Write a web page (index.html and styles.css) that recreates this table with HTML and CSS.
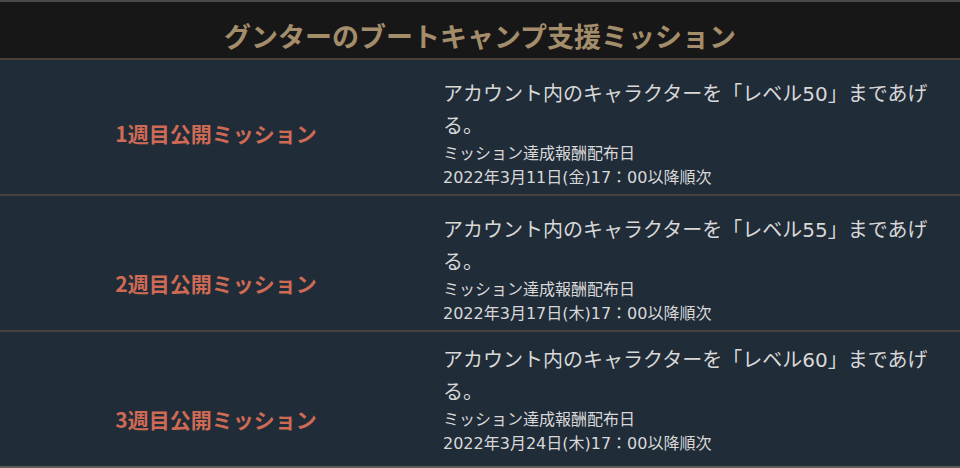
FILE: index.html
```html
<!DOCTYPE html>
<html lang="ja">
<head>
<meta charset="utf-8">
<link rel="stylesheet" href="styles.css">
</head>
<body>
<div class="missions">
  <div class="missions-head">グンターのブートキャンプ支援ミッション</div>
  <div class="row">
    <div class="label">1週目公開ミッション</div>
    <div class="detail">
      <p class="goal">アカウント内のキャラクターを「レベル50」まであげる。</p>
      <p class="note">ミッション達成報酬配布日</p>
      <p class="note">2022年3月11日(金)17：00以降順次</p>
    </div>
  </div>
  <div class="row">
    <div class="label label--low">2週目公開ミッション</div>
    <div class="detail">
      <p class="goal">アカウント内のキャラクターを「レベル55」まであげる。</p>
      <p class="note">ミッション達成報酬配布日</p>
      <p class="note">2022年3月17日(木)17：00以降順次</p>
    </div>
  </div>
  <div class="row">
    <div class="label label--low">3週目公開ミッション</div>
    <div class="detail detail--tight">
      <p class="goal">アカウント内のキャラクターを「レベル60」まであげる。</p>
      <p class="note">ミッション達成報酬配布日</p>
      <p class="note">2022年3月24日(木)17：00以降順次</p>
    </div>
  </div>
</div>
</body>
</html>
```
FILE: styles.css
```css
html, body {
  margin: 0;
  padding: 0;
  background: #202c38;
}
body {
  font-family: "Noto Sans CJK JP", "Noto Sans", sans-serif;
}
.missions {
  width: 960px;
  border-top: 2px solid #4b4a48;
  border-bottom: 2px solid #5f5b55;
  box-sizing: border-box;
}
.missions-head {
  height: 58px;
  box-sizing: border-box;
  padding-top: 13px;
  line-height: 42px;
  background: #181717;
  border-bottom: 2px solid #4a4238;
  color: #a38d6b;
  font-size: 27px;
  font-weight: 700;
  text-align: center;
}
.row {
  display: flex;
  height: 136px;
  box-sizing: border-box;
  background: #202c38;
  border-bottom: 2px solid #47423c;
}
.row:last-child {
  border-bottom: 0;
  height: 134px;
}
.label {
  width: 432px;
  flex: none;
  display: flex;
  align-items: center;
  justify-content: center;
  padding-top: 12px;
  box-sizing: border-box;
  color: #cf6a55;
  font-size: 21px;
  font-weight: 700;
}
.label--low {
  padding-top: 40px;
}
.detail {
  flex: 1;
  padding: 18px 20px 0 11px;
  color: #d8d8d8;
  font-family: "DejaVu Sans", "Noto Sans CJK JP", sans-serif;
}
.detail--tight {
  padding-top: 12px;
}
.detail p {
  margin: 0;
}
.goal {
  font-size: 20px;
  line-height: 32px;
}
.note {
  font-size: 16px;
  line-height: 24px;
}
```
